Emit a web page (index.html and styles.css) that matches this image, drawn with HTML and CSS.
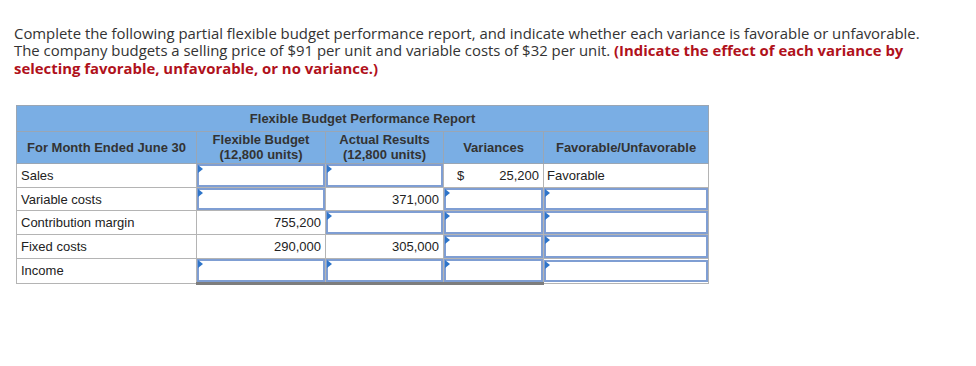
FILE: index.html
```html
<!DOCTYPE html>
<html>
<head>
<meta charset="utf-8">
<link rel="stylesheet" href="styles.css">
</head>
<body>
<div class="page">
  <p class="intro">Complete the following partial flexible budget performance report, and indicate whether each variance is favorable or unfavorable.<br>The company budgets a selling price of $91 per unit and variable costs of $32 per unit. <strong class="hint">(Indicate the effect of each variance by<br>selecting favorable, unfavorable, or no variance.)</strong></p>
  <table class="report">
    <colgroup>
      <col class="c1"><col class="c2"><col class="c3"><col class="c4"><col class="c5">
    </colgroup>
    <thead>
      <tr class="title-row"><th colspan="5">Flexible Budget Performance Report</th></tr>
      <tr class="head-row">
        <th>For Month Ended June 30</th>
        <th>Flexible Budget<br>(12,800 units)</th>
        <th>Actual Results<br>(12,800 units)</th>
        <th>Variances</th>
        <th>Favorable/Unfavorable</th>
      </tr>
    </thead>
    <tbody>
      <tr>
        <td class="label">Sales</td>
        <td class="inp"><div class="box"></div></td>
        <td class="inp"><div class="box"></div></td>
        <td class="num"><span class="cur">$</span><span>25,200</span></td>
        <td class="text">Favorable</td>
      </tr>
      <tr>
        <td class="label">Variable costs</td>
        <td class="inp"><div class="box"></div></td>
        <td class="val">371,000</td>
        <td class="inp"><div class="box"></div></td>
        <td class="inp"><div class="box"></div></td>
      </tr>
      <tr>
        <td class="label">Contribution margin</td>
        <td class="val">755,200</td>
        <td class="inp"><div class="box"></div></td>
        <td class="inp"><div class="box"></div></td>
        <td class="inp"><div class="box"></div></td>
      </tr>
      <tr>
        <td class="label">Fixed costs</td>
        <td class="val">290,000</td>
        <td class="val">305,000</td>
        <td class="inp"><div class="box"></div></td>
        <td class="inp"><div class="box"></div></td>
      </tr>
      <tr class="last">
        <td class="label">Income</td>
        <td class="inp total"><div class="box"></div></td>
        <td class="inp total"><div class="box"></div></td>
        <td class="inp total"><div class="box"></div></td>
        <td class="inp"><div class="box"></div></td>
      </tr>
    </tbody>
  </table>
</div>
</body>
</html>
```

FILE: styles.css
```css
html, body {
  margin: 0;
  padding: 0;
  background: #fff;
}
.page {
  padding: 25px 14px 0 14px;
}
.intro {
  margin: 0;
  font-family: "Open Sans", Lato, sans-serif;
  font-size: 14.9px;
  line-height: 17.3px;
  color: #333;
  white-space: nowrap;
}
.hint {
  color: #b0111b;
  font-weight: 700;
}
.report {
  margin: 28px 0 0 2px;
  border-collapse: collapse;
  font-family: "Liberation Sans", Arial, sans-serif;
  font-size: 13px;
  color: #222;
  table-layout: fixed;
  width: 692px;
}
.c1 { width: 180px; }
.c2 { width: 129px; }
.c3 { width: 118px; }
.c4 { width: 100px; }
.c5 { width: 165px; }
.report th {
  background: #7aaee4;
  border: 1px solid #9aa6b4;
  font-weight: bold;
  color: #333;
  padding: 0;
  line-height: 15px;
}
.title-row th {
  height: 25px;
}
.head-row th {
  height: 31px;
}
.report td {
  border: 1px solid #b4b4b4;
  height: 22.8px;
  padding: 0 4px;
  line-height: 15px;
}
.label { text-align: left; }
.val { text-align: right; }
.report td.text { text-align: left; padding-left: 3px; }
.num {
  text-align: right;
}
.num .cur {
  float: left;
  padding-left: 9px;
}
.report td.inp {
  padding: 0;
  position: relative;
}
.box {
  height: 18.8px;
  margin: 0;
  border: 2px solid #7f9ed3;
  background: #fff;
  position: relative;
}
.box::before {
  content: "";
  position: absolute;
  left: -1px;
  top: -1px;
  border-top: 4px solid transparent;
  border-bottom: 4px solid transparent;
  border-left: 5px solid #2f75c9;
}
.report td.total {
  border-bottom: 3px solid #7d7d7d;
}
```
